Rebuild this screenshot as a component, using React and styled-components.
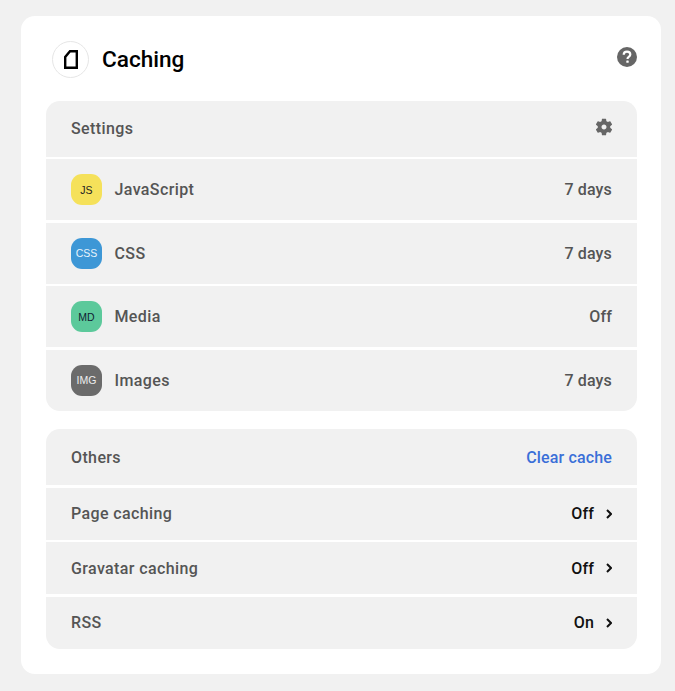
import React from 'react'
import styled, { createGlobalStyle } from 'styled-components'

const GlobalStyle = createGlobalStyle`
  html, body {
    margin: 0;
    padding: 0;
    background: #f1f1f1;
    font-family: Roboto, "Liberation Sans", sans-serif;
  }
`

const Page = styled.div`
  width: 675px;
  height: 691px;
  box-sizing: border-box;
  padding: 16px 14px 17px 21px;
`

const Card = styled.div`
  height: 658px;
  box-sizing: border-box;
  background: #fff;
  border-radius: 14px;
  padding: 23px 24px 0 25px;
`

const Header = styled.div`
  display: flex;
  align-items: flex-start;
  justify-content: space-between;
  height: 62px;
`

const TitleGroup = styled.div`
  display: flex;
  align-items: center;
  gap: 13px;
  padding: 2px 0 0 6px;
`

const LogoCircle = styled.div`
  width: 37px;
  height: 37px;
  box-sizing: border-box;
  border: 1px solid #e6e6e6;
  border-radius: 50%;
  display: flex;
  align-items: center;
  justify-content: center;
`

const Title = styled.h1`
  margin: 0;
  font-size: 22.6px;
  font-weight: 500;
  color: #000;
`

const HelpIcon = styled.svg`
  width: 20px;
  height: 20px;
  margin-top: 8px;
  display: block;
`

const Panel = styled.div`
  display: flex;
  flex-direction: column;
  gap: 2.5px;
  border-radius: 14px;
  overflow: hidden;
  margin-bottom: ${(p) => p.$mb || 0}px;
`

const Row = styled.div`
  display: flex;
  align-items: center;
  justify-content: space-between;
  background: #f1f1f1;
  height: ${(p) => p.$h}px;
  padding: 0 25px;
  font-size: 16px;
  font-weight: 500;
  letter-spacing: 0.38px;
  color: #555;
`

const Label = styled.div`
  display: flex;
  align-items: center;
  gap: 12.5px;
`

const Badge = styled.span`
  width: 31px;
  height: 31px;
  border-radius: 11px;
  background: ${(p) => p.$bg};
  color: ${(p) => p.$fg};
  display: flex;
  align-items: center;
  justify-content: center;
  font-family: "Liberation Sans", sans-serif;
  font-size: 10.5px;
  font-weight: 400;
  letter-spacing: 0;
`

const Value = styled.span`
  letter-spacing: 0.15px;
`

const ClearLink = styled.a`
  color: #3a6fd8;
  letter-spacing: 0.15px;
`

const Status = styled.div`
  display: flex;
  align-items: center;
  gap: 12px;
  color: #111;
  letter-spacing: 0.15px;
`

const Chevron = styled.svg`
  width: 6px;
  height: 10px;
  display: block;
`

const GearIcon = styled.svg`
  width: 20px;
  height: 20px;
  display: block;
  margin: 0 -2px 3px 0;
`

const types = [
  { name: 'JavaScript', code: 'JS', bg: '#f5e15a', fg: '#222', value: '7 days' },
  { name: 'CSS', code: 'CSS', bg: '#3d97d6', fg: '#e8f3fb', value: '7 days' },
  { name: 'Media', code: 'MD', bg: '#5cc99b', fg: '#123', value: 'Off' },
  { name: 'Images', code: 'IMG', bg: '#6b6b6b', fg: '#eee', value: '7 days' },
]

const others = [
  { name: 'Page caching', value: 'Off' },
  { name: 'Gravatar caching', value: 'Off' },
  { name: 'RSS', value: 'On' },
]

export default function App() {
  return (
    <Page>
      <GlobalStyle />
      <Card>
        <Header>
          <TitleGroup>
            <LogoCircle>
              <svg width="14" height="19" viewBox="0 0 14 19" fill="none">
                <path d="M6 1.200h6.800v16.600H1.200V7z" stroke="#000" strokeWidth="2.400" strokeLinejoin="miter" />
              </svg>
            </LogoCircle>
            <Title>Caching</Title>
          </TitleGroup>
          <HelpIcon viewBox="0 0 20 20">
            <circle cx="10" cy="10" r="10" fill="#666" />
            <path
              d="M6.700 7.800c0-2 1.400-3.200 3.300-3.200s3.300 1.100 3.300 2.800c0 1.300-.7 1.900-1.500 2.400-.9.600-1.300 1-1.300 2.100"
              fill="none"
              stroke="#fff"
              strokeWidth="2.200"
            />
            <rect x="9.300" y="13.400" width="2.400" height="2.400" rx=".5" fill="#fff" />
          </HelpIcon>
        </Header>
        <Panel $mb={18.5}>
          <Row $h={55.5}>
            <span>Settings</span>
            <GearIcon viewBox="0 0 24 24">
              <path
                fill="#666"
                d="M19.430 12.980c.04-.32.070-.64.070-.98s-.03-.66-.07-.98l2.110-1.650c.19-.15.240-.42.120-.64l-2-3.460c-.12-.22-.39-.3-.61-.22l-2.490 1c-.52-.4-1.080-.73-1.690-.98l-.38-2.650A.488.488 0 0 0 14 2h-4c-.25 0-.46.18-.49.420l-.38 2.650c-.61.250-1.170.59-1.690.98l-2.490-1c-.23-.09-.49 0-.61.220l-2 3.460c-.13.220-.07.490.12.640l2.110 1.650c-.04.320-.07.650-.07.980s.03.660.07.980l-2.110 1.650c-.19.150-.24.420-.12.640l2 3.460c.12.220.39.300.61.220l2.490-1c.52.400 1.080.730 1.690.980l.38 2.650c.03.240.24.420.49.420h4c.25 0 .46-.18.490-.42l.38-2.650c.61-.250 1.170-.59 1.690-.98l2.490 1c.23.090.49 0 .61-.22l2-3.460c.12-.22.070-.49-.12-.64l-2.110-1.650zM12 15c-1.660 0-3-1.340-3-3s1.340-3 3-3 3 1.340 3 3-1.340 3-3 3z"
              />
            </GearIcon>
          </Row>
          {types.map((t) => (
            <Row $h={61} key={t.name}>
              <Label>
                <Badge $bg={t.bg} $fg={t.fg}>{t.code}</Badge>
                {t.name}
              </Label>
              <Value>{t.value}</Value>
            </Row>
          ))}
        </Panel>
        <Panel>
          <Row $h={56}>
            <span>Others</span>
            <ClearLink>Clear cache</ClearLink>
          </Row>
          {others.map((o) => (
            <Row $h={52.2} key={o.name}>
              <span>{o.name}</span>
              <Status>
                {o.value}
                <Chevron viewBox="0 0 6 10">
                  <path d="M1 1l4 4-4 4" fill="none" stroke="#111" strokeWidth="2" />
                </Chevron>
              </Status>
            </Row>
          ))}
        </Panel>
      </Card>
    </Page>
  )
}
